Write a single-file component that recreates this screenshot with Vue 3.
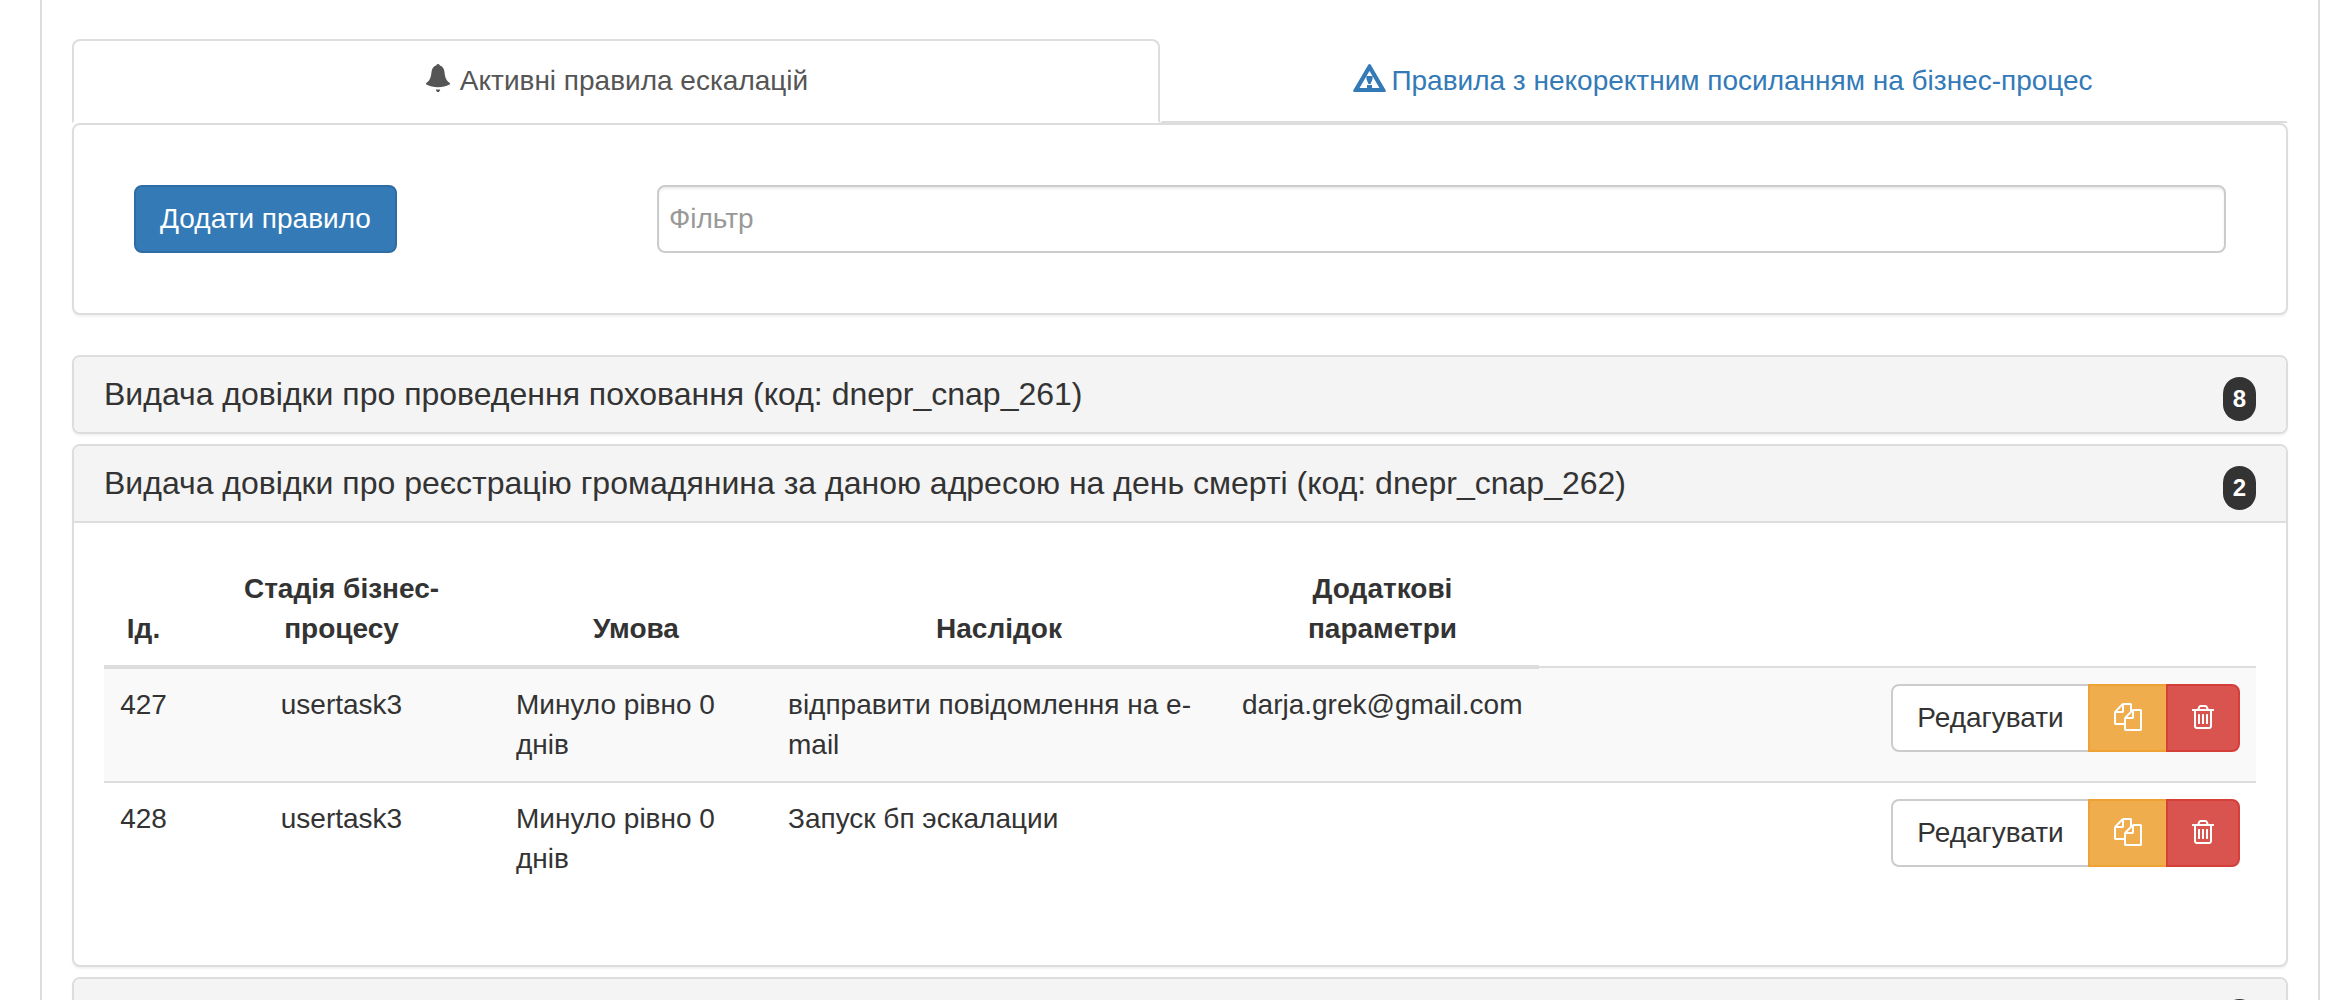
<script setup>
import { ref } from 'vue'

const filter = ref('')
const rules = [
  { id: 427, task: 'usertask3', condition: 'Минуло рівно 0 днів', effect: 'відправити повідомлення на e-mail', params: 'darja.grek@gmail.com' },
  { id: 428, task: 'usertask3', condition: 'Минуло рівно 0 днів', effect: 'Запуск бп эскалации', params: '' },
]
const groups = [
  { title: 'Видача довідки про проведення поховання (код: dnepr_cnap_261)', count: 8, rules: [] },
  { title: 'Видача довідки про реєстрацію громадянина за даною адресою на день смерті (код: dnepr_cnap_262)', count: 2, rules },
  { title: '', count: '', rules: [] },
]
</script>

<template>
  <div class="page">
    <main class="content">
      <nav class="tabs">
        <a class="tab active">
          <svg class="bell" viewBox="0 0 24 28" width="24" height="28"><path d="M10.200 1.500Q10.200 0 12 0t1.800 1.500C16.600 2.300 18 4.500 18.500 8c.5 4.500 1.300 8.500 5 10.800.8.600.6 1.600-.5 2C20.200 22.200 16.500 23.200 12 23.200S3.800 22.200 1 20.800c-1.100-.4-1.300-1.400-.5-2C4.200 16.500 5 12.500 5.500 8 6 4.500 7.400 2.300 10.200 1.500zM9.700 25.500h4.600L13 28h-2z" fill="currentColor" /></svg>
          <span>Активні правила ескалацій</span>
        </a>
        <a class="tab">
          <svg class="warn" viewBox="0 0 33 28" width="33" height="28"><path fill-rule="evenodd" d="M15.400.600Q16.500-.600 17.600.600L32.700 26.300Q33.200 28 31.700 28H1.300Q-.2 28 .3 26.300zM16.500 7L6.500 24H14v-3h5v3h7.500z" fill="currentColor" /><path d="M13.400 12h6.200v3l-2 5h-2.200l-2-5z" fill="currentColor" /></svg>
          <span>Правила з некоректним посиланням на бізнес-процес</span>
        </a>
      </nav>

      <section class="panel toolbar">
        <button class="btn primary">Додати правило</button>
        <input v-model="filter" class="filter" placeholder="Фільтр" />
      </section>

      <section class="groups">
        <article v-for="(group, i) in groups" :key="i" class="panel">
          <header class="heading" :class="{ open: group.rules.length }">
            <h4>{{ group.title }}</h4>
            <span class="badge">{{ group.count }}</span>
          </header>
          <div v-if="group.rules.length" class="body">
            <table>
              <colgroup>
                <col class="c-id" /><col class="c-task" /><col class="c-cond" /><col class="c-effect" /><col class="c-params" /><col />
              </colgroup>
              <thead>
                <tr>
                  <th>Ід.</th>
                  <th>Стадія бізнес-процесу</th>
                  <th>Умова</th>
                  <th>Наслідок</th>
                  <th>Додаткові параметри</th>
                </tr>
              </thead>
              <tbody>
                <tr v-for="rule in group.rules" :key="rule.id">
                  <td class="center">{{ rule.id }}</td>
                  <td class="center">{{ rule.task }}</td>
                  <td>{{ rule.condition }}</td>
                  <td>{{ rule.effect }}</td>
                  <td>{{ rule.params }}</td>
                  <td>
                    <div class="actions">
                      <button class="btn edit">Редагувати</button>
                      <button class="btn copy">
                        <svg viewBox="0 0 1792 1792" width="28" height="28"><path fill="currentColor" d="M1696 384q40 0 68 28t28 68v1216q0 40-28 68t-68 28h-960q-40 0-68-28t-28-68v-288h-544q-40 0-68-28t-28-68v-672q0-40 20-88t48-76l408-408q28-28 76-48t88-20h416q40 0 68 28t28 68v328q68-40 128-40h416zm-544 213l-299 299h299v-299zm-640-384l-299 299h299v-299zm196 647l316-316v-416h-384v416q0 40-28 68t-68 28h-416v640h512v-256q0-40 20-88t48-76zm956 804v-1152h-384v416q0 40-28 68t-68 28h-416v640h896z" /></svg>
                      </button>
                      <button class="btn remove">
                        <svg viewBox="192 0 1408 1792" width="22" height="28"><path fill="currentColor" d="M704 736v576q0 14-9 23t-23 9h-64q-14 0-23-9t-9-23v-576q0-14 9-23t23-9h64q14 0 23 9t9 23zm256 0v576q0 14-9 23t-23 9h-64q-14 0-23-9t-9-23v-576q0-14 9-23t23-9h64q14 0 23 9t9 23zm256 0v576q0 14-9 23t-23 9h-64q-14 0-23-9t-9-23v-576q0-14 9-23t23-9h64q14 0 23 9t9 23zm128 724v-948h-896v948q0 22 7 40.5t14.5 27 10.5 8.500h832q3 0 10.500-8.500t14.500-27 7-40.500zm-672-1076h448l-48-117q-7-9-17-11h-317q-10 2-17 11zm928 32v64q0 14-9 23t-23 9h-96v948q0 83-47 143.500t-113 60.500h-832q-66 0-113-58.500t-47-141.500v-952h-96q-14 0-23-9t-9-23v-64q0-14 9-23t23-9h309l70-167q15-37 54-63t79-26h320q40 0 79 26t54 63l70 167h309q14 0 23 9t9 23z" /></svg>
                      </button>
                    </div>
                  </td>
                </tr>
              </tbody>
            </table>
          </div>
        </article>
      </section>
    </main>
  </div>
</template>

<style>
body {
  background: #fff;
  overflow: hidden;
}
</style>

<style scoped>
* {
  box-sizing: border-box;
}
.page {
  height: 1000px;
  overflow: hidden;
  padding: 0 18px 0 40px;
  font: 28px/40px "Liberation Sans", Arial, sans-serif;
  color: #333;
}
.content {
  height: 1000px;
  padding: 39px 30px 0;
  border: solid #ddd;
  border-width: 0 2px;
  overflow: hidden;
}
.tabs {
  display: flex;
}
.tab {
  display: flex;
  flex: 1;
  justify-content: center;
  height: 84px;
  padding: 20px 2px 20px 0;
  border: 2px solid transparent;
  border-bottom-color: #ddd;
  border-radius: 8px 8px 0 0;
  color: #337ab7;
}
.tab.active {
  flex: 0 0 1088px;
  padding: 20px 0 20px 2px;
  border-color: #ddd;
  border-bottom-color: transparent;
  color: #555;
}
.tab svg {
  margin-top: 3px;
}
.bell {
  margin-right: 10px;
}
.warn {
  margin-right: 5px;
}
.panel {
  border: 2px solid #ddd;
  border-radius: 8px;
  background: #fff;
  box-shadow: 0 2px 2px rgba(0, 0, 0, 0.05);
}
.toolbar {
  display: flex;
  justify-content: space-between;
  height: 192px;
  padding: 60px;
}
.btn {
  height: 68px;
  padding: 0 24px;
  border: 2px solid;
  border-radius: 8px;
  font: inherit;
  white-space: nowrap;
}
.primary {
  width: 263px;
  background: #337ab7;
  border-color: #2e6da4;
  color: #fff;
}
.filter {
  width: 1569px;
  height: 68px;
  padding: 0 10px;
  border: 2px solid #ccc;
  border-radius: 8px;
  font: inherit;
  color: #555;
  box-shadow: inset 0 2px 2px rgba(0, 0, 0, 0.075);
}
.filter::placeholder {
  color: #999;
  opacity: 1;
}
.groups {
  display: flex;
  flex-direction: column;
  gap: 10px;
  margin-top: 40px;
}
.heading {
  display: flex;
  justify-content: space-between;
  height: 75px;
  padding: 20px 30px 0;
  border-radius: 6px;
  background: #f4f4f4;
}
.heading.open {
  height: 77px;
  border-bottom: 2px solid #ddd;
  border-radius: 6px 6px 0 0;
}
h4 {
  margin: 0;
  font-size: 32px;
  font-weight: 400;
  line-height: 35px;
}
.badge {
  width: 33px;
  height: 44px;
  border-radius: 20px;
  background: #333;
  color: #fff;
  font-size: 24px;
  font-weight: 700;
  line-height: 44px;
  text-align: center;
}
.body {
  height: 442px;
  padding: 30px;
}
table {
  width: 100%;
  table-layout: fixed;
  border-collapse: collapse;
}
.c-id { width: 79px; }
.c-task { width: 317px; }
.c-cond { width: 272px; }
.c-effect { width: 454px; }
.c-params { width: 313px; }
th {
  padding: 16px 46px;
  vertical-align: bottom;
  border-bottom: 4px solid #ddd;
}
th:first-child {
  padding: 16px 0;
}
td {
  height: 115px;
  padding: 16px;
  vertical-align: top;
  border-top: 2px solid #ddd;
}
tbody tr:nth-child(odd) {
  background: #f9f9f9;
}
.center {
  text-align: center;
}
.actions {
  display: flex;
  justify-content: flex-end;
}
.actions .btn {
  display: flex;
  align-items: center;
  justify-content: center;
}
.actions .edit {
  width: 199px;
  margin-right: -2px;
  border-color: #ccc;
  border-radius: 8px 0 0 8px;
  background: #fff;
  color: #333;
}
.actions .copy {
  width: 80px;
  margin-right: -2px;
  border-color: #eea236;
  border-radius: 0;
  background: #f0ad4e;
  color: #fff;
}
.actions .remove {
  width: 74px;
  border-color: #d43f3a;
  border-radius: 0 8px 8px 0;
  background: #d9534f;
  color: #fff;
}
.actions svg {
  flex: none;
  margin-bottom: 2px;
}
</style>
